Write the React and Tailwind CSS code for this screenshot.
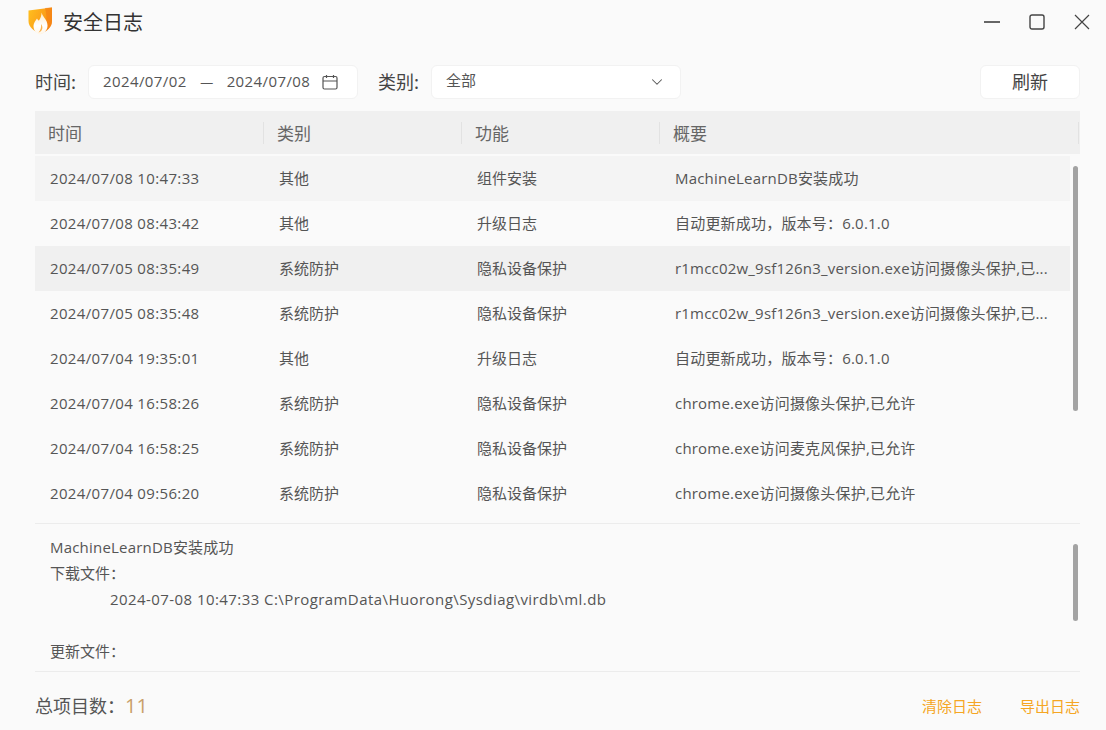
import { ChevronDown } from "lucide-react";

const rows = [
  ["2024/07/08 10:47:33", "其他", "组件安装", "MachineLearnDB安装成功"],
  ["2024/07/08 08:43:42", "其他", "升级日志", "自动更新成功，版本号：6.0.1.0"],
  ["2024/07/05 08:35:49", "系统防护", "隐私设备保护", "r1mcc02w_9sf126n3_version.exe访问摄像头保护,已..."],
  ["2024/07/05 08:35:48", "系统防护", "隐私设备保护", "r1mcc02w_9sf126n3_version.exe访问摄像头保护,已..."],
  ["2024/07/04 19:35:01", "其他", "升级日志", "自动更新成功，版本号：6.0.1.0"],
  ["2024/07/04 16:58:26", "系统防护", "隐私设备保护", "chrome.exe访问摄像头保护,已允许"],
  ["2024/07/04 16:58:25", "系统防护", "隐私设备保护", "chrome.exe访问麦克风保护,已允许"],
  ["2024/07/04 09:56:20", "系统防护", "隐私设备保护", "chrome.exe访问摄像头保护,已允许"],
];

const latin = { fontFamily: '"Open Sans", "Noto Sans CJK SC", sans-serif' };

const Logo = () => (
  <svg width="25" height="28" viewBox="0 0 25 28" className="-mt-[2px]">
    <defs>
      <linearGradient id="shield" x1="0" y1="0" x2="1" y2="0.5">
        <stop offset="0" stopColor="#ffc01e" />
        <stop offset="1" stopColor="#f98f17" />
      </linearGradient>
      <linearGradient id="flame" x1="0.5" y1="0" x2="0.5" y2="1">
        <stop offset="0" stopColor="#ffe9c4" />
        <stop offset="0.6" stopColor="#ffffff" />
        <stop offset="1" stopColor="#fff6e8" />
      </linearGradient>
    </defs>
    <path d="M0.5 3.5 L24 0.5 V14 C24 20 19 24 12.5 27 C6 24 0.5 20 0.5 14 Z" fill="url(#shield)" />
    <path d="M17 0.9 L24 0.5 V14 C24 20 19 24 12.5 27 C18 21 20 12 17 0.9 Z" fill="#f47f14" opacity="0.65" />
    <path d="M13.5 5.5 C14.5 10 19.5 12.5 19.5 18.5 C19.5 23 16.5 26.5 12 27.5 C8 26.5 5.5 23 5.5 19 C5.5 16 7.5 14 9 11.5 C9.8 13 10.5 13.5 11 13.5 C12.5 11.5 13.5 8.5 13.5 5.5 Z" fill="url(#flame)" />
    <path d="M13 17 C14.5 19 15 21 13.5 23.5 C12.8 24.6 11.5 25.3 10.5 25.5 C12.5 23.5 13.5 20.5 13 17 Z" fill="#fbb34f" />
  </svg>
);

const CalendarIcon = () => (
  <svg width="16" height="16" viewBox="0 0 16 16" fill="none" stroke="#555" strokeWidth="1.2">
    <rect x="1" y="2.5" width="14" height="12.5" rx="1.5" />
    <path d="M1 7H15M4.5 1V4M11.5 1V4" />
  </svg>
);

const WindowControls = () => (
  <div className="flex items-center">
    <svg width="16" height="16" viewBox="0 0 16 16" stroke="#555" strokeWidth="1.8" className="mr-[29px]">
      <path d="M0 8H16" />
    </svg>
    <svg width="16" height="16" viewBox="0 0 16 16" fill="none" stroke="#444" strokeWidth="1.4" className="mr-[29px]">
      <rect x="1" y="1" width="14" height="14" rx="2" />
    </svg>
    <svg width="16" height="16" viewBox="0 0 16 16" stroke="#444" strokeWidth="1.2">
      <path d="M1 1L15 15M15 1L1 15" />
    </svg>
  </div>
);

const HeaderCell = ({ label, className }) => (
  <div className={`flex items-center h-[22px] border-l border-[#e2e2e2] pl-[13px] ${className}`}>{label}</div>
);

export default function App() {
  return (
    <div
      className="w-[1106px] h-[730px] bg-[#fafafa] text-[#555] overflow-hidden flex flex-col"
      style={{ fontFamily: '"Noto Sans CJK SC", "Noto Sans", sans-serif' }}
    >
      <div className="h-[44px] flex items-center justify-between pl-[28px] pr-[16px] shrink-0">
        <div className="flex items-center gap-[10px]">
          <Logo />
          <span className="text-[20px] text-[#333]">安全日志</span>
        </div>
        <WindowControls />
      </div>

      <div className="flex items-center h-[34px] mt-[21px] ml-[35px] mr-[26px] text-[18px] shrink-0">
        <span className="w-[53px] pb-[2px] text-[#444]">时间:</span>
        <div className="w-[270px] h-full bg-white rounded-md border border-[#f2f2f2] flex items-center pl-[14px] text-[15px] text-[#555]">
          <span className="tracking-[0.4px] pb-[1px]" style={latin}>2024/07/02</span>
          <span className="w-[40px] text-center">—</span>
          <span className="tracking-[0.4px] pb-[1px]" style={latin}>2024/07/08</span>
          <span className="ml-[12px]"><CalendarIcon /></span>
        </div>
        <span className="ml-[20px] w-[53px] pb-[2px] text-[#444]">类别:</span>
        <div className="w-[250px] h-full bg-white rounded-md border border-[#f2f2f2] flex items-center justify-between pl-[14px] pr-[14px] text-[15px]">
          <span className="pb-[3px]">全部</span>
          <ChevronDown size={18} strokeWidth={1.4} />
        </div>
        <div className="ml-auto w-[100px] h-full bg-white rounded-md border border-[#f2f2f2] flex items-center justify-center pb-[2px] text-[#444]">刷新</div>
      </div>

      <div className="ml-[35px] mr-[26px] mt-[12px] h-[43px] bg-[#f0f0f0] flex items-center text-[17px] text-[#666] shrink-0">
        <div className="w-[228px] pl-[13px]">时间</div>
        <HeaderCell label="类别" className="w-[198px]" />
        <HeaderCell label="功能" className="w-[198px]" />
        <HeaderCell label="概要" className="flex-1" />
        <div className="h-[22px] border-l border-[#e2e2e2] mr-[1px]" />
      </div>

      <div className="relative ml-[35px] mr-[26px] mt-[2px] h-[368px] border-b border-[#ececec] shrink-0">
        <div className="w-[1035px]">
          {rows.map((r, i) => (
            <div
              key={r[0]}
              className={`flex items-center h-[45px] text-[15px] ${i === 2 ? "bg-[#f0f0f0]" : i === 0 ? "bg-[#f4f4f4]" : ""}`}
            >
              <div className="w-[229px] pl-[15px] tracking-[0.35px]" style={latin}>{r[0]}</div>
              <div className="w-[198px] pl-[15px]">{r[1]}</div>
              <div className="w-[198px] pl-[15px]">{r[2]}</div>
              <div className="flex-1 pl-[15px] tracking-[0.2px] whitespace-nowrap overflow-hidden" style={latin}>{r[3]}</div>
            </div>
          ))}
        </div>
        <div className="absolute right-[2px] top-[10px] w-[5px] h-[245px] rounded-full bg-[#a3a3a3]" />
      </div>

      <div className="relative ml-[35px] mr-[26px] h-[148px] border-b border-[#ececec] pl-[15px] pt-[10px] text-[15px] shrink-0" style={latin}>
        <div className="h-[26px] leading-[26px] tracking-[0.2px]">MachineLearnDB安装成功</div>
        <div className="h-[26px] leading-[26px]">下载文件：</div>
        <div className="h-[26px] leading-[26px] pl-[60px] tracking-[0.43px]">2024-07-08 10:47:33 C:\ProgramData\Huorong\Sysdiag\virdb\ml.db</div>
        <div className="h-[26px]" />
        <div className="h-[26px] leading-[26px]">更新文件：</div>
        <div className="absolute right-[2px] top-[20px] w-[5px] h-[77px] rounded-full bg-[#a3a3a3]" />
      </div>

      <div className="ml-[35px] mr-[26px] flex-1 flex items-center justify-between pt-[10px]">
        <div className="text-[18px] text-[#555]">
          总项目数：<span className="text-[20px] text-[#c9a06a]" style={latin}>11</span>
        </div>
        <div className="flex items-center gap-[38px] text-[15px] text-[#f5a623]">
          <span>清除日志</span>
          <span>导出日志</span>
        </div>
      </div>
    </div>
  );
}
